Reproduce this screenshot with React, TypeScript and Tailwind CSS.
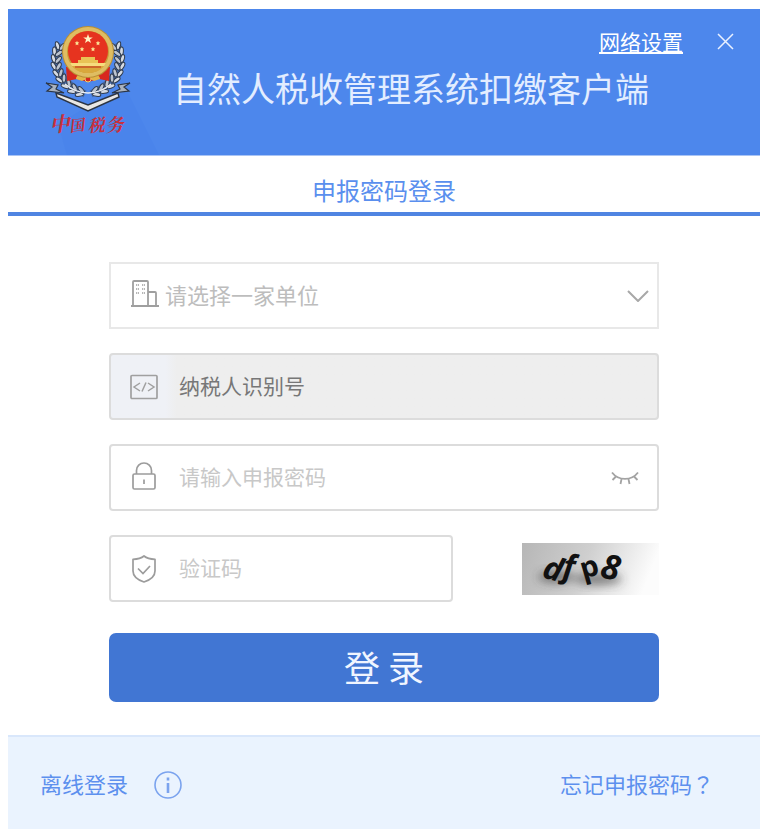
import React, { useState } from 'react';

const WREATH = [
    { x: 15, y: 20, a: -10 },
    { x: 12, y: 26, a: -25 },
    { x: 11, y: 33, a: -12 },
    { x: 11, y: 40, a: 0 },
    { x: 13, y: 47, a: 12 },
    { x: 16, y: 53, a: 25 },
    { x: 21, y: 59, a: 40 },
    { x: 27, y: 64, a: 55 },
    { x: 34, y: 67, a: 70 },
];

const STARS = [
    { x: 32, y: 18 },
    { x: 53, y: 18 },
    { x: 37, y: 24 },
    { x: 48, y: 24 },
];

function WreathSide() {
    return (
        <g>
            <path d="M14 18C7 34 12 56 40 69" fill="none" stroke="#3c4c63" strokeWidth="7" strokeOpacity="0.5" />
            {WREATH.map((leaf) => (
                <g key={leaf.y} transform={`translate(${leaf.x} ${leaf.y}) rotate(${-leaf.a})`}>
                    <ellipse cx="-2.5" cy="0" rx="1.9" ry="4.2" transform="rotate(-28)" fill="#d5dae2" stroke="#2f3a4b" strokeWidth="1" />
                    <ellipse cx="3" cy="0" rx="1.9" ry="4.2" transform="rotate(28)" fill="#bcc4d0" stroke="#2f3a4b" strokeWidth="1" />
                </g>
            ))}
        </g>
    );
}

function TaxEmblem() {
    return (
        <svg viewBox="0 0 86 114" className="h-[114px] w-[86px] shrink-0" role="img" aria-label="中国税务">
            <WreathSide />
            <g transform="translate(86 0) scale(-1 1)">
                <WreathSide />
            </g>

            {/* Drapery under the disc */}
            <path d="M21 42h44l-1 14-10-2-11 3-11-3-10 2z" fill="#d8281f" />
            <path d="M31 54c0-4 5-6 12-6s12 2 12 6l-6 2-6-3-6 3z" fill="#e3b548" />
            <circle cx="43" cy="54" r="3" fill="#d8281f" stroke="#f0cf6a" strokeWidth="1" />

            {/* Gold disc */}
            <circle cx="43" cy="27" r="26" fill="#b98f35" />
            <circle cx="43" cy="27" r="25" fill="#dfbd62" />
            <circle cx="43" cy="27" r="21" fill="#c79a36" />
            <circle cx="43" cy="26" r="20" fill="#e6331f" />
            <path d="M43 9l1.2 3.4h3.6l-2.9 2.1 1.1 3.500-3-2.1-3 2.1 1.1-3.500-2.9-2.1h3.6z" fill="#fff3c4" />
            {STARS.map((s) => (
                <path key={`${s.x}-${s.y}`} transform={`translate(${s.x} ${s.y})`} d="M0-2.2l.7 1.5 1.6.2-1.2 1.1.3 1.6L0 1.4l-1.4.8.3-1.6-1.2-1.1 1.6-.2z" fill="#fbe596" />
            ))}
            <path d="M36 32h14v3h3v3H33v-3h3z" fill="#e9c355" />
            <path d="M25 38h36l-2 3H27z" fill="#f6dc7d" />
            <path d="M27 41h32c-4 5-10 7-16 7s-12-2-16-7z" fill="#d9a83c" />
            <path d="M30 42h26" stroke="#c43b20" strokeWidth="1.2" />

            {/* Ribbon */}
            <path d="M1 58l12 2-2 4 8 4-17-2 5-4z" fill="#aab2bf" stroke="#2c3544" strokeWidth="1.2" />
            <path d="M85 58l-12 2 2 4-8 4 17-2-5-4z" fill="#aab2bf" stroke="#2c3544" strokeWidth="1.2" />
            <path d="M11 68l32 12 30-12 1 4-31 14-31-14z" fill="#e9e7e4" stroke="#2c3544" strokeWidth="1.4" />
            <path d="M20 59c8 7 15 9 23 9s15-2 23-9" fill="none" stroke="#e8ecf2" strokeWidth="1.5" />

            <g fill="#c8303c" fontWeight="700" fontStyle="italic" className="font-['Noto_Serif_CJK_SC','Noto_Sans_CJK_SC',serif]">
                <text transform="translate(5 107) rotate(-4)" fontSize="20">中</text>
                <text transform="translate(25 107) rotate(-8)" fontSize="15">国</text>
                <text transform="translate(43 107) rotate(-4)" fontSize="17">税</text>
                <text transform="translate(61 107) rotate(-4)" fontSize="18">务</text>
            </g>
        </svg>
    );
}

function BuildingIcon() {
    return (
        <svg viewBox="0 0 28 28" className="h-7 w-7" fill="none" stroke="#9f9f9f" strokeWidth="1.8">
            <path d="M2 26V2q0-1 1-1h13q1 0 1 1v24M17 12h7q1 0 1 1v13M0 26h28" />
            <path d="M5 5h3M11 5h3M5 9h3M11 9h3M5 13h3M11 13h3" strokeDasharray="1.300 0.700" strokeWidth="1.5" />
        </svg>
    );
}

function CodeIcon() {
    return (
        <svg viewBox="0 0 28 26" className="h-[26px] w-7" fill="none" stroke="#a0a0a0" strokeWidth="1.7">
            <rect x="1" y="1.5" width="26" height="23" rx="1" />
            <path d="M10 9l-6 4 6 4M18 9l6 4-6 4M16 8.500l-4 9" strokeWidth="1.5" />
        </svg>
    );
}

function LockIcon() {
    return (
        <svg viewBox="0 0 24 28" className="mb-1 h-7 w-6" fill="none" stroke="#9c9c9c" strokeWidth="1.7">
            <rect x="1" y="12" width="22" height="15" rx="1.5" />
            <path d="M4.500 12V8.500a7.500 7.500 0 0 1 15 0V12M12 17.500v4.500" />
        </svg>
    );
}

function ShieldIcon() {
    return (
        <svg viewBox="0 0 24 28" className="h-7 w-6" fill="none" stroke="#9c9c9c" strokeWidth="1.7">
            <path d="M12 1C9 3.500 5 4.200 1 4.300V16c0 5 5 9 11 11 6-2 11-6 11-11V4.300C19 4.200 15 3.500 12 1z" strokeLinejoin="round" />
            <path d="M6 13.500l5 5 7-7.500" />
        </svg>
    );
}

function ClosedEyeIcon() {
    return (
        <svg viewBox="0 0 28 14" className="h-[14px] w-7" fill="none" stroke="#a3a3a3" strokeWidth="1.8">
            <path d="M1 1.500C7.500 10 20.500 10 27 1.500M5 5.500L1.500 9M10.500 8l-1 5M17.500 8l1 5M23 5.500L26.500 9" />
        </svg>
    );
}

function Captcha() {
    return (
        <svg viewBox="0 0 137 52" className="h-[52px] w-[137px] overflow-visible" role="img" aria-label="验证码图片">
            <defs>
                <linearGradient id="captcha-bg" x2="1" y2="0.15">
                    <stop offset="0" stopColor="#b6b6b6" />
                    <stop offset="0.5" stopColor="#cfcfcf" />
                    <stop offset="1" stopColor="#fcfcfc" />
                </linearGradient>
                <filter id="captcha-shadow" x="-50%" y="-50%" width="200%" height="200%">
                    <feGaussianBlur stdDeviation="5" />
                </filter>
            </defs>
            <rect width="137" height="52" fill="url(#captcha-bg)" />
            <g filter="url(#captcha-shadow)" fill="#3f3f3f" fillOpacity="0.6">
                <ellipse cx="34" cy="34" rx="18" ry="6" />
                <ellipse cx="76" cy="36" rx="24" ry="6" />
            </g>
            <g fill="#111" fontWeight="700" className="font-['Open_Sans',sans-serif]">
                <text transform="translate(19 34) rotate(16)" fontSize="32" fontStyle="italic">d</text>
                <text transform="translate(40 34) rotate(6)" fontSize="32" fontStyle="italic">f</text>
                <text transform="translate(61 36) rotate(-16)" fontSize="29">p</text>
                <text transform="translate(77 34) rotate(12)" fontSize="34" fontStyle="italic">8</text>
            </g>
        </svg>
    );
}

interface FieldProps {
    id: string;
    label: string;
    icon: React.ReactNode;
    type?: string;
    className?: string;
    children?: React.ReactNode;
}

function Field({ id, label, icon, type = 'text', className = '', children }: FieldProps) {
    return (
        <div className={`flex h-[67px] items-center rounded-[4px] border-2 border-[#dcdcdc] bg-white pr-[18px] ${className}`}>
            <label htmlFor={id} aria-label={label} className="flex w-[66px] shrink-0 justify-center">
                {icon}
            </label>
            <input
                id={id}
                type={type}
                placeholder={label}
                className="min-w-0 flex-1 bg-transparent px-[2px] pb-1 text-[21px] leading-8 text-[#555] outline-none placeholder:text-[#c8c8c8]"
            />
            {children}
        </div>
    );
}

export default function App() {
    const [showPassword, setShowPassword] = useState(false);

    return (
        <div className="bg-white pt-[9px] pr-[10px] pb-3 pl-2 font-['Noto_Sans_CJK_SC',sans-serif] font-normal">
            {/* Title bar */}
            <header className="relative flex h-[147px] items-start border-b border-[#a9c4f5] bg-[#4d87ec] pt-4 pr-[26px] pl-[37px]">
                <svg viewBox="0 0 160 146" className="pointer-events-none absolute bottom-0 left-0 h-[146px] w-[160px]">
                    <path d="M50 115L116 76L151 146H59z" fill="#4a84eb" />
                </svg>
                <div className="relative">
                    <TaxEmblem />
                </div>
                <div className="relative flex min-w-0 flex-1 flex-col">
                    <div className="flex h-8 items-center justify-end gap-[34px]">
                        <a href="#network" className="text-[21px] leading-8 text-white underline decoration-2 underline-offset-2">
                            网络设置
                        </a>
                        <button type="button" aria-label="关闭" className="text-[#eaf1ff]">
                            <svg viewBox="0 0 17 17" className="h-[17px] w-[17px]" fill="none" stroke="currentColor" strokeWidth="1.5">
                                <path d="M1 1l15 15M16 1L1 16" />
                            </svg>
                        </button>
                    </div>
                    <h1 className="pl-[42px] text-[34px] leading-[62px] whitespace-nowrap text-[#e3edff]">自然人税收管理系统扣缴客户端</h1>
                </div>
            </header>

            <div className="border-b-4 border-[#5085e2] pt-4 pb-1 text-center">
                <h2 className="text-[24px] leading-9 text-[#5a8fee]">申报密码登录</h2>
            </div>

            <form className="flex flex-col gap-6 px-[101px] pt-[46px] pb-[33px]" onSubmit={(e) => e.preventDefault()}>
                <div className="flex h-[67px] items-center border-2 border-[#e8e8e8] pr-2 pl-5">
                    <label htmlFor="company" aria-label="单位" className="shrink-0 pb-1">
                        <BuildingIcon />
                    </label>
                    <select id="company" className="min-w-0 flex-1 appearance-none bg-transparent pb-1 pl-[6px] text-[22px] leading-8 text-[#bdbdbd] outline-none">
                        <option>请选择一家单位</option>
                    </select>
                    <svg viewBox="0 0 22 12" className="h-3 w-[22px]" fill="none" stroke="#a8a8a8" strokeWidth="2">
                        <path d="M1 1l10 10L21 1" />
                    </svg>
                </div>

                <Field
                    id="taxpayer"
                    label="纳税人识别号"
                    icon={<CodeIcon />}
                    className="bg-linear-to-r from-[#eff1f6] from-10% to-[#eee] to-12% [&_input]:placeholder:text-[#777]"
                />

                <Field id="password" label="请输入申报密码" icon={<LockIcon />} type={showPassword ? 'text' : 'password'}>
                    <button type="button" aria-label="显示密码" onClick={() => setShowPassword(!showPassword)}>
                        <ClosedEyeIcon />
                    </button>
                </Field>

                <div className="flex items-center justify-between">
                    <Field id="captcha" label="验证码" icon={<ShieldIcon />} className="w-[344px]" />
                    <button type="button" aria-label="换一张">
                        <Captcha />
                    </button>
                </div>

                <button type="submit" className="mt-[7px] h-[69px] rounded-[7px] bg-[#4176d3] pb-1 text-[36px] text-[#f0f5ff]">
                    登 录
                </button>
            </form>

            <footer className="flex h-[94px] items-center justify-between border-t-2 border-[#d9e7fb] bg-[#eaf3fe] pr-[46px] pl-8 text-[22px] leading-8 text-[#5d90ee]">
                <div className="flex items-center gap-[26px]">
                    <a href="#offline">离线登录</a>
                    <button type="button" aria-label="离线登录说明" className="pt-1">
                        <svg viewBox="0 0 28 28" className="h-7 w-7" fill="none" stroke="#7ba3ee" strokeWidth="1.6">
                            <circle cx="14" cy="14" r="13" />
                            <path d="M14 12v10M14 6.500v3" strokeWidth="2.600" />
                        </svg>
                    </button>
                </div>
                <a href="#forgot">
                    忘记申报密码<span className="font-['Noto_Sans_CJK_TC',sans-serif]" lang="zh-TW">？</span>
                </a>
            </footer>
        </div>
    );
}
